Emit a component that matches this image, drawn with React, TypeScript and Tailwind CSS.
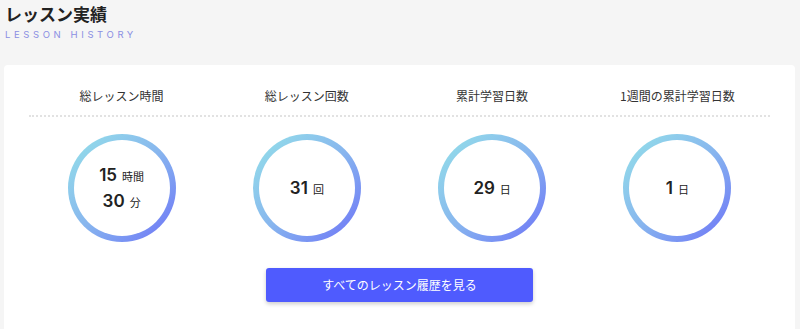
import React from "react";

interface Stat {
  label: string;
  lines: { value: string; unit: string }[];
}

const stats: Stat[] = [
  { label: "総レッスン時間", lines: [{ value: "15", unit: "時間" }, { value: "30", unit: "分" }] },
  { label: "総レッスン回数", lines: [{ value: "31", unit: "回" }] },
  { label: "累計学習日数", lines: [{ value: "29", unit: "日" }] },
  { label: "1週間の累計学習日数", lines: [{ value: "1", unit: "日" }] },
];

function Ring({ lines }: { lines: Stat["lines"] }) {
  return (
    <div className="w-[108px] h-[108px] rounded-full p-[6px] bg-linear-to-br from-[#94e2e8] via-[#88b6ee] to-[#6e6ff6]">
      <div className="w-full h-full rounded-full bg-white flex flex-col items-center justify-center gap-[9px]">
        {lines.map((l, i) => (
          <div key={i} className="flex items-baseline gap-[5px] text-[#222] leading-none">
            <span className="text-[17px] font-semibold font-['Inter',sans-serif]">{l.value}</span>
            <span className="text-[11px]">{l.unit}</span>
          </div>
        ))}
      </div>
    </div>
  );
}

export default function App() {
  return (
    <div
      className="w-[800px] h-[329px] overflow-hidden bg-[#f5f5f5]"
      style={{ fontFamily: '"Noto Sans CJK JP", "Noto Sans", sans-serif' }}
    >
      <div className="pl-[5px] pt-[2px]">
        <h1 className="text-[17px] font-bold text-[#222] leading-[24px]">レッスン実績</h1>
        <p className="text-[9.5px] tracking-[3.6px] text-[#8b8fe3] leading-[12px] mt-[3px] font-['Inter',sans-serif]">LESSON HISTORY</p>
      </div>

      <div className="mt-[24px] ml-[4px] w-[791px] h-[300px] bg-white rounded-[4px] px-[25px] pt-[22px]">
        <div className="grid grid-cols-4 border-b-2 border-dotted border-[#e2e2e2] pb-[10px]">
          {stats.map((s) => (
            <div key={s.label} className="text-center text-[12px] text-[#333] leading-[18px]">
              {s.label}
            </div>
          ))}
        </div>

        <div className="grid grid-cols-4 mt-[17px]">
          {stats.map((s) => (
            <div key={s.label} className="flex justify-center">
              <Ring lines={s.lines} />
            </div>
          ))}
        </div>

        <div className="flex justify-center mt-[26px]">
          <button className="w-[267px] h-[34px] rounded-[3px] bg-[#4f5bfe] text-white text-[12px] shadow-[0_2px_4px_rgba(0,0,0,0.2)]">
            すべてのレッスン履歴を見る
          </button>
        </div>
      </div>
    </div>
  );
}
